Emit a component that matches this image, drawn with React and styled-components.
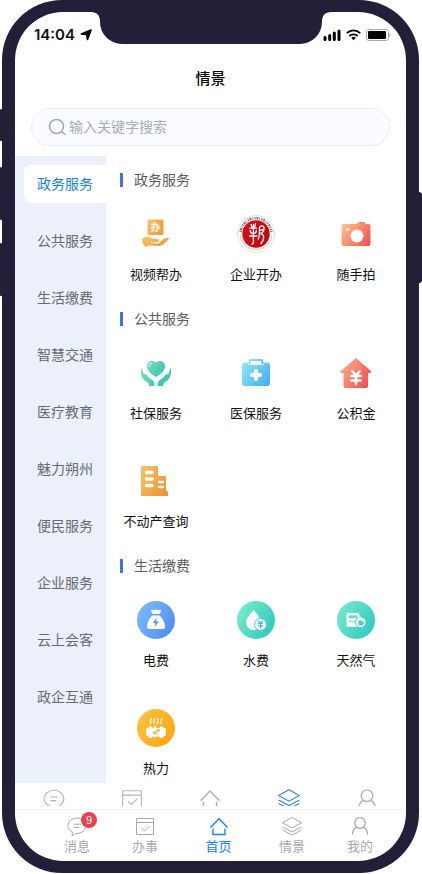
import React from "react";
import styled, { createGlobalStyle, css } from "styled-components";

const ink = "#221f38";

const GlobalStyle = createGlobalStyle`
  * { box-sizing: border-box; }
  body {
    margin: 0;
    background: #fff;
    font-family: "Liberation Sans", "Noto Sans CJK SC", sans-serif;
  }
  button { border: 0; padding: 0; margin: 0; background: none; font: inherit; cursor: pointer; }
  h1, h2, ul { margin: 0; padding: 0; font-weight: 400; }
  ul { list-style: none; }
`;

/* Handset */
const Device = styled.div`
  position: relative;
  margin: 0 3px 0 2px;
  padding: 12px 13px;
  background: ${ink};
  border-radius: 60px;
`;
const SideKey = styled.span`
  position: absolute;
  top: ${(p) => p.$top}px;
  height: ${(p) => p.$height}px;
  width: 6px;
  border-radius: 3px;
  background: ${ink};
  ${(p) => (p.$right ? "right: -3px;" : "left: -3px;")}
`;
const Notch = styled.div`
  position: absolute;
  top: 12px;
  left: 50%;
  width: 222px;
  height: 32px;
  margin-left: -111px;
  background: ${ink};
  border-radius: 0 0 22px 22px;
  &::before,
  &::after {
    content: "";
    position: absolute;
    top: 0;
    width: 7px;
    height: 7px;
  }
  &::before {
    right: 100%;
    background: radial-gradient(circle at 0 100%, transparent 6px, ${ink} 7px);
  }
  &::after {
    left: 100%;
    background: radial-gradient(circle at 100% 100%, transparent 6px, ${ink} 7px);
  }
`;
const Screen = styled.div`
  background: #fff;
  border-radius: 48px;
  overflow: hidden;
`;

/* Header */
const StatusBar = styled.div`
  display: flex;
  justify-content: space-between;
  align-items: center;
  height: 46px;
  padding: 0 15px 0 19px;
`;
const StatusGroup = styled.div`
  display: flex;
  align-items: center;
  gap: 5px;
`;
const Clock = styled.span`
  font: 600 15px/20px Inter, sans-serif;
  color: #111;
`;
const PageTitle = styled.h1`
  font-size: 15px;
  line-height: 20px;
  font-weight: 500;
  text-align: center;
  color: #000;
  padding: 11px 0 19px;
`;
const SearchBox = styled.label`
  display: flex;
  align-items: center;
  gap: 3px;
  height: 38px;
  margin: 0 16px 10px;
  padding: 0 16px;
  border: 1px solid #e6edf5;
  border-radius: 19px;
  background: #fafcff;
`;
const SearchInput = styled.input`
  flex: 1;
  min-width: 0;
  padding: 0;
  border: 0;
  outline: 0;
  background: transparent;
  font: inherit;
  font-size: 14px;
  line-height: 20px;
  color: #333;
  &::placeholder { color: #a5acb8; opacity: 1; }
`;

/* Body */
const Body = styled.main`
  display: grid;
  grid-template-columns: 91px 1fr;
`;
const Sidebar = styled.nav`
  display: flex;
  flex-direction: column;
  gap: 19px;
  padding: 9px 0 0 9px;
  background: #ebf0fb;
`;
const SideItem = styled.button`
  height: 38px;
  padding-left: 13px;
  border-radius: 8px 0 0 8px;
  text-align: left;
  font-size: 14px;
  line-height: 20px;
  color: #666b75;
  ${(p) => p.$active && css`
    background: #fff;
    color: #1a84d6;
  `}
`;
const Content = styled.div`
  display: flex;
  flex-direction: column;
  gap: 15px;
  padding-top: 9px;
`;
const SectionTitle = styled.h2`
  display: flex;
  align-items: center;
  gap: 11px;
  height: 31px;
  padding: 0 0 2px 14px;
  font-size: 14px;
  line-height: 20px;
  color: #5c5c5c;
  &::before {
    content: "";
    width: 3px;
    height: 14px;
    background: #3f73ea;
  }
`;
const Grid = styled.ul`
  display: grid;
  grid-template-columns: repeat(3, 1fr);
  row-gap: 15px;
`;
const Service = styled.button`
  display: flex;
  flex-direction: column;
  align-items: center;
  gap: 12px;
  width: 100%;
  padding: 19px 0 4px;
  font-size: 13px;
  line-height: 20px;
  color: #111;
  white-space: nowrap;
`;

/* Tab bars */
const PeekBar = styled.div`
  display: grid;
  grid-template-columns: repeat(5, 1fr);
  justify-items: center;
  height: 27px;
  padding-top: 5px;
  border-bottom: 1px solid #f3f3f3;
`;
const PeekIcon = styled.button`
  height: 18px;
  overflow: hidden;
  color: ${(p) => (p.$active ? "#3386c5" : "#b1b4b8")};
`;
const TabBar = styled.nav`
  display: grid;
  grid-template-columns: 68fr 68fr 79fr 68fr 68fr;
  height: 51px;
  padding: 6px 12px 0 28px;
`;
const Tab = styled.button`
  display: flex;
  flex-direction: column;
  align-items: center;
  gap: 1px;
  font-size: 13px;
  line-height: 20px;
  color: ${(p) => (p.$active ? "#1684fc" : "#a5a9ae")};
`;
const TabIcon = styled.span`
  position: relative;
  display: flex;
`;
const Badge = styled.span`
  position: absolute;
  top: -4px;
  left: 14px;
  width: 16px;
  height: 16px;
  border-radius: 8px;
  background: #e34450;
  color: #fff;
  font-size: 11px;
  line-height: 16px;
  text-align: center;
`;

/* Service drawings, all on a 38 x 38 canvas */
const Art = ({ id, from, to, children }) => (
  <svg width="38" height="38" viewBox="0 0 38 38" aria-hidden="true">
    <defs>
      <linearGradient id={id} x1="0" y1="0.2" x2="1" y2="0.8">
        <stop offset="0" stopColor={from} />
        <stop offset="1" stopColor={to} />
      </linearGradient>
    </defs>
    {children}
  </svg>
);

const VideoIcon = () => (
  <Art id="video" from="#f8c066" to="#ed9837">
    <rect x="10.500" y="4.500" width="16" height="15.500" rx="1.500" fill="url(#video)" />
    <text x="18.500" y="16" fontSize="10" fontWeight="700" textAnchor="middle" fill="#fff">办</text>
    <path d="M5 23.500c3-2 7-1.800 9.500-.5 1.500.8 2.500.8 4 .8h3c2 0 2.400 1.700 1.500 2.600l4-2.600c2-1 4.500-1 5.500-.4-2 1.400-5 5.600-8 7-3.500 1.200-7.500.2-11 .2-2 0-3.500 1-5 1.400L5.500 28z" fill="url(#video)" />
    <path d="M14.500 27.300c2.500.8 7 1 8.200-.4.900-1.200-.2-2.100-1.700-2.200" fill="none" stroke="#fff" strokeWidth="1.200" strokeLinecap="round" />
  </Art>
);

const SealIcon = () => (
  <Art id="seal" from="#d2101c" to="#bd0812">
    <circle cx="19" cy="19" r="18.500" fill="#fff" stroke="#e3d3ce" strokeWidth=".7" />
    <path d="M3.500 17a15.600 15.600 0 0 1 31 0" fill="none" stroke="#9b776b" strokeWidth="2.600" strokeDasharray="1.200 .8 2 .9 .8 1.300" />
    <path d="M3.300 20.500a15.800 15.800 0 0 0 31.400 0" fill="none" stroke="#cdb3ac" strokeWidth="1.500" strokeDasharray=".9 .7" />
    <circle cx="19" cy="19" r="13.700" fill="url(#seal)" />
    <g fill="none" stroke="#fff" strokeWidth="1.300" strokeLinecap="round">
      <path d="M14 9.500l1.300 3.200M18.500 8.500l-.8 4.200M13 13.200h6.500M13.200 15.500c0 2 .8 3 3 3s3.200-1 3.200-3M12.800 21h7M16.400 9.500v17c0 1.500-.6 2.500-1.600 3" />
      <path d="M21.200 24c1.400-2.500 1.400-6 1.200-11 1-3 4.600-2.500 4.600.2 0 2.800-1 4.800-4 5.300M22.500 15.500l4-1M24.500 19c3 1 3 5-.5 9.500" />
    </g>
  </Art>
);

const CameraIcon = () => (
  <Art id="camera" from="#fbc18a" to="#f25555">
    <path d="M6.500 9H20l1.500-2h6l1.500 2h2.500a2 2 0 0 1 2 2v18a2 2 0 0 1-2 2h-25a2 2 0 0 1-2-2V11a2 2 0 0 1 2-2z" fill="url(#camera)" />
    <circle cx="20" cy="21" r="6.500" fill="#fff" />
    <circle cx="10.700" cy="14.500" r="1.500" fill="#fff" />
  </Art>
);

const HeartIcon = () => (
  <Art id="heart" from="#76dfae" to="#36c0b9">
    <path d="M19 23c-3-2-9-5.500-9-10.500C10 7 16 5.500 19 9c3-3.500 9-2 9 3.500C28 17.500 22 21 19 23z" fill="url(#heart)" />
    <path d="M12 12.500c0-2 1.200-3.200 2.800-3.400" fill="none" stroke="#fff" strokeLinecap="round" />
    <path d="M4 13.500l3 7c1-1 2.500 0 3.500 1.500l2.500 2.500c3.500 1.500 4.500 3.500 4.500 7.500h-5.500c0-2-1-3.500-3-4.500C5 25 3.500 21 4 13.500zM34 13.500l-3 7c-1-1-2.500 0-3.500 1.500L25 24.500c-3.500 1.500-4.500 3.500-4.500 7.500H26c0-2 1-3.500 3-4.500 4-2.500 5.500-6.500 5-14z" fill="url(#heart)" />
  </Art>
);

const MedkitIcon = () => (
  <Art id="medkit" from="#8ce4fa" to="#48b0e9">
    <path d="M12.500 10V7.500a1.500 1.500 0 0 1 1.500-1.500h10a1.500 1.500 0 0 1 1.500 1.500V10" fill="none" stroke="url(#medkit)" strokeWidth="1.800" />
    <path d="M8 8.500h3v2.200h16V8.500h3a3 3 0 0 1 3 3V29a3 3 0 0 1-3 3H8a3 3 0 0 1-3-3V11.500a3 3 0 0 1 3-3z" fill="url(#medkit)" />
    <path d="M19 17v8M15 21h8" stroke="#fff" strokeWidth="4" strokeLinecap="round" />
  </Art>
);

const FundIcon = () => (
  <Art id="fund" from="#fbb08a" to="#ef4e51">
    <path d="M19 4l15 13v2h-3v13a2 2 0 0 1-2 2H8.500a2 2 0 0 1-2-2V19h-3v-2z" fill="url(#fund)" />
    <path d="M15.500 17.500l3.500 4 3.500-4M14.500 22h9M14.500 26.500h9M19 22v8" fill="none" stroke="#fff" strokeWidth="2.600" strokeLinecap="round" />
  </Art>
);

const BuildingIcon = () => (
  <Art id="building" from="#f8be61" to="#eb9338">
    <path d="M4 5a1 1 0 0 1 1-1h15a1 1 0 0 1 1 1v9h7a1 1 0 0 1 1 1v14h1a1.500 1.500 0 0 1 1 1v4H4z" fill="url(#building)" />
    <path d="M9.500 10.500H15M9.500 17H15M9.500 23.500H15" stroke="#fff" strokeWidth="3.400" strokeLinecap="round" />
    <path d="M22 20h4M22 25h4" stroke="#fff" strokeWidth="2.400" strokeLinecap="round" />
  </Art>
);

const PowerIcon = () => (
  <Art id="power" from="#77bdfc" to="#538bed">
    <circle cx="19" cy="19" r="19" fill="url(#power)" />
    <path d="M14 10c0-1.500 1.500-1.500 2.500-.7 1-1 3.500-1 4.500 0 1-.8 3-.8 3 .7L22.500 13h-6.800zM15.500 14.500h7c3.500 3 5.500 7 5.500 11.500a2 2 0 0 1-2 2H12a2 2 0 0 1-2-2c0-4.500 2-8.500 5.500-11.500z" fill="#fff" />
    <path d="M19.800 16.500l-4 5.500h2.700l-.8 4 4.200-5.500h-2.700z" fill="#5794ef" />
  </Art>
);

const WaterIcon = () => (
  <Art id="water" from="#76edc9" to="#30c7c1">
    <circle cx="19" cy="19" r="19" fill="url(#water)" />
    <path d="M16.500 9c4 5 7.500 9 7.500 12.500a7.500 7.500 0 0 1-15 0C9 18 12.500 14 16.500 9z" fill="#fff" />
    <circle cx="23.500" cy="23.500" r="6" fill="#fff" stroke="#44d0c3" strokeWidth="1" />
    <path d="M21.300 19.800l2.200 2.500 2.200-2.500M20.800 22.500h5.400M20.800 24.800h5.400M23.500 22.500v5" fill="none" stroke="#36cbbe" strokeWidth="1.200" />
  </Art>
);

const GasIcon = () => (
  <Art id="gas" from="#73ebc8" to="#2fc8c1">
    <circle cx="19" cy="19" r="19" fill="url(#gas)" />
    <path d="M11 12h9.500a1.800 1.800 0 0 1 1.800 1.800V26H11a1.500 1.500 0 0 1-1.500-1.500v-11A1.500 1.500 0 0 1 11 12z" fill="#fff" />
    <path d="M11.700 14.300h8.600v3h-8.600z" fill="#60dfc6" />
    <path d="M11.700 20.500h8" stroke="#4ed5c4" strokeWidth="1.400" strokeDasharray="1.500 1" />
    <circle cx="23.800" cy="21.300" r="5.200" fill="#fff" stroke="#42d0c3" />
    <circle cx="24" cy="21.800" r="2.800" fill="#46d2c4" />
    <path d="M22 15l2 2.500M24 19l1.500 1" stroke="#fff" strokeWidth="1.600" />
  </Art>
);

const HeatIcon = () => (
  <Art id="heat" from="#fbc242" to="#fba70e">
    <circle cx="19" cy="19" r="19" fill="url(#heat)" />
    <g fill="none" stroke="#fff" strokeWidth="1.100" strokeLinecap="round">
      <path d="M14.500 9.500c-3 2 1.500 3-1.500 5.500M18 9.500c-3 2 1.500 3-1.500 5.500M21.500 9.500c-3 2 1.500 3-1.500 5.500M25 9.500c-3 2 1.500 3-1.500 5.500" />
    </g>
    <path d="M12 17.500h2.500l1.500 1.500h6l1.500-1.500H26l1 2.500v6.500l-1 2.500h-2.500L22 27.500h-6L14.500 29H12l-1-2.500V20z" fill="#fff" />
    <path d="M10.300 20v6M27.700 20v6M18 18v10" stroke="#fff" strokeWidth="2.200" strokeLinecap="round" />
    <path d="M16 23.500l5-1.700M16 24c1.500 0 2.500 1 4.500.8" stroke="#faae20" strokeWidth="1.200" />
    <circle cx="21.500" cy="21.500" r="1.300" fill="#faae20" />
  </Art>
);

/* Line drawings for the tab bars */
const Line = ({ width = 20, children }) => (
  <svg width={width} height={width} viewBox="0 0 20 20" fill="none" stroke="currentColor" strokeWidth="1" aria-hidden="true">
    {children}
  </svg>
);
const ChatGlyph = ({ width }) => (
  <Line width={width}>
    <path d="M9 17.500c5.800 0 10-3.300 10-7.700C19 5.500 15 2 10 2S1 5.500 1 9.800c0 2.700 1.500 4.700 4.500 6.200L5 20l4-2.500M6.500 8.200h7.500M6.500 11.500h5.500" />
  </Line>
);
const TaskGlyph = ({ width }) => (
  <Line width={width}>
    <path d="M1.500 2.500h17v16h-17zM1.500 6.500h17M6.500 12l3 3 5-5" />
  </Line>
);
const HomeGlyph = ({ width }) => (
  <Line width={width}>
    <path d="M1.500 11.500L10 2.800l8.500 8.700M4 12.500V18.500h12v-6" strokeWidth="1.400" />
  </Line>
);
const LayersGlyph = ({ width }) => (
  <Line width={width}>
    <path d="M10 1.500l9.500 5.300L10 12 .5 6.800zM.5 11L10 16l9.500-5M.5 14L10 19l9.500-5" />
  </Line>
);
const PersonGlyph = ({ width }) => (
  <Line width={width}>
    <path d="M2.500 18.500c0-3.500 1.300-5.800 4.200-7.200M17.500 18.500c0-3.500-1.300-5.800-4.200-7.200" strokeWidth="1.300" />
    <circle cx="10" cy="7" r="5.300" strokeWidth="1.300" />
  </Line>
);

const categories = ["政务服务", "公共服务", "生活缴费", "智慧交通", "医疗教育", "魅力朔州", "便民服务", "企业服务", "云上会客", "政企互通"];

const sections = [
  { title: "政务服务", items: [["视频帮办", VideoIcon], ["企业开办", SealIcon], ["随手拍", CameraIcon]] },
  { title: "公共服务", items: [["社保服务", HeartIcon], ["医保服务", MedkitIcon], ["公积金", FundIcon], ["不动产查询", BuildingIcon]] },
  { title: "生活缴费", items: [["电费", PowerIcon], ["水费", WaterIcon], ["天然气", GasIcon], ["热力", HeatIcon]] },
];

const tabs = [
  ["消息", ChatGlyph],
  ["办事", TaskGlyph],
  ["首页", HomeGlyph],
  ["情景", LayersGlyph],
  ["我的", PersonGlyph],
];

export default function App() {
  return (
    <>
      <GlobalStyle />
      <Device>
        <SideKey $top={109} $height={32} />
        <SideKey $top={167} $height={53} />
        <SideKey $top={243} $height={53} />
        <SideKey $top={192} $height={91} $right />
        <Screen>
          <StatusBar>
            <StatusGroup>
              <Clock>14:04</Clock>
              <svg width="12" height="12" viewBox="0 0 12 12" aria-hidden="true">
                <path d="M11 1L7.500 10.500 6.500 5.500 1.300 4.900z" fill="#000" stroke="#000" strokeWidth="1.600" strokeLinejoin="round" />
              </svg>
            </StatusGroup>
            <StatusGroup>
              <svg width="18" height="12" viewBox="0 0 18 12" aria-hidden="true">
                <path d="M2 8.500v2M6.700 6.500v4M11.300 4v6.500M16 2v8.500" stroke="#000" strokeWidth="3" strokeLinecap="round" />
              </svg>
              <svg width="15" height="12" viewBox="0 0 15 12" fill="none" stroke="#000" strokeWidth="1.800" aria-hidden="true">
                <path d="M.8 4.200a9.500 9.500 0 0 1 13.400 0M3.300 7a6 6 0 0 1 8.400 0" />
                <path d="M5.200 8.700a3.400 3.400 0 0 1 4.600 0L7.500 11.300z" fill="#000" stroke="none" />
              </svg>
              <svg width="25" height="12" viewBox="0 0 25 12" aria-hidden="true">
                <rect x=".5" y=".5" width="22" height="11" rx="2.500" fill="none" stroke="#aaa" />
                <rect x="2" y="2" width="18" height="8" rx="1" fill="#000" />
                <path d="M23.500 4q2 2 0 4z" fill="#999" />
              </svg>
            </StatusGroup>
          </StatusBar>
          <PageTitle>情景</PageTitle>
          <SearchBox>
            <svg width="18" height="18" viewBox="0 0 18 18" fill="none" stroke="#a0a9b7" strokeWidth="1.600" aria-hidden="true">
              <circle cx="8.500" cy="8.500" r="7" />
              <path d="M13.500 13.500l3.500 3" strokeLinecap="round" />
            </svg>
            <SearchInput type="text" aria-label="搜索" placeholder="输入关键字搜索" />
          </SearchBox>
          <Body>
            <Sidebar>
              {categories.map((name, i) => (
                <SideItem key={name} $active={i === 0}>{name}</SideItem>
              ))}
            </Sidebar>
            <Content>
              {sections.map((section) => (
                <section key={section.title}>
                  <SectionTitle>{section.title}</SectionTitle>
                  <Grid>
                    {section.items.map(([name, Icon]) => (
                      <li key={name}>
                        <Service>
                          <Icon />
                          {name}
                        </Service>
                      </li>
                    ))}
                  </Grid>
                </section>
              ))}
            </Content>
          </Body>
          <PeekBar>
            {tabs.map(([name, Glyph]) => (
              <PeekIcon key={name} aria-label={name} $active={name === "情景"}>
                <Glyph width={22} />
              </PeekIcon>
            ))}
          </PeekBar>
          <TabBar>
            {tabs.map(([name, Glyph]) => (
              <Tab key={name} $active={name === "首页"}>
                <TabIcon>
                  <Glyph />
                  {name === "消息" && <Badge>9</Badge>}
                </TabIcon>
                {name}
              </Tab>
            ))}
          </TabBar>
        </Screen>
        <Notch />
      </Device>
    </>
  );
}
